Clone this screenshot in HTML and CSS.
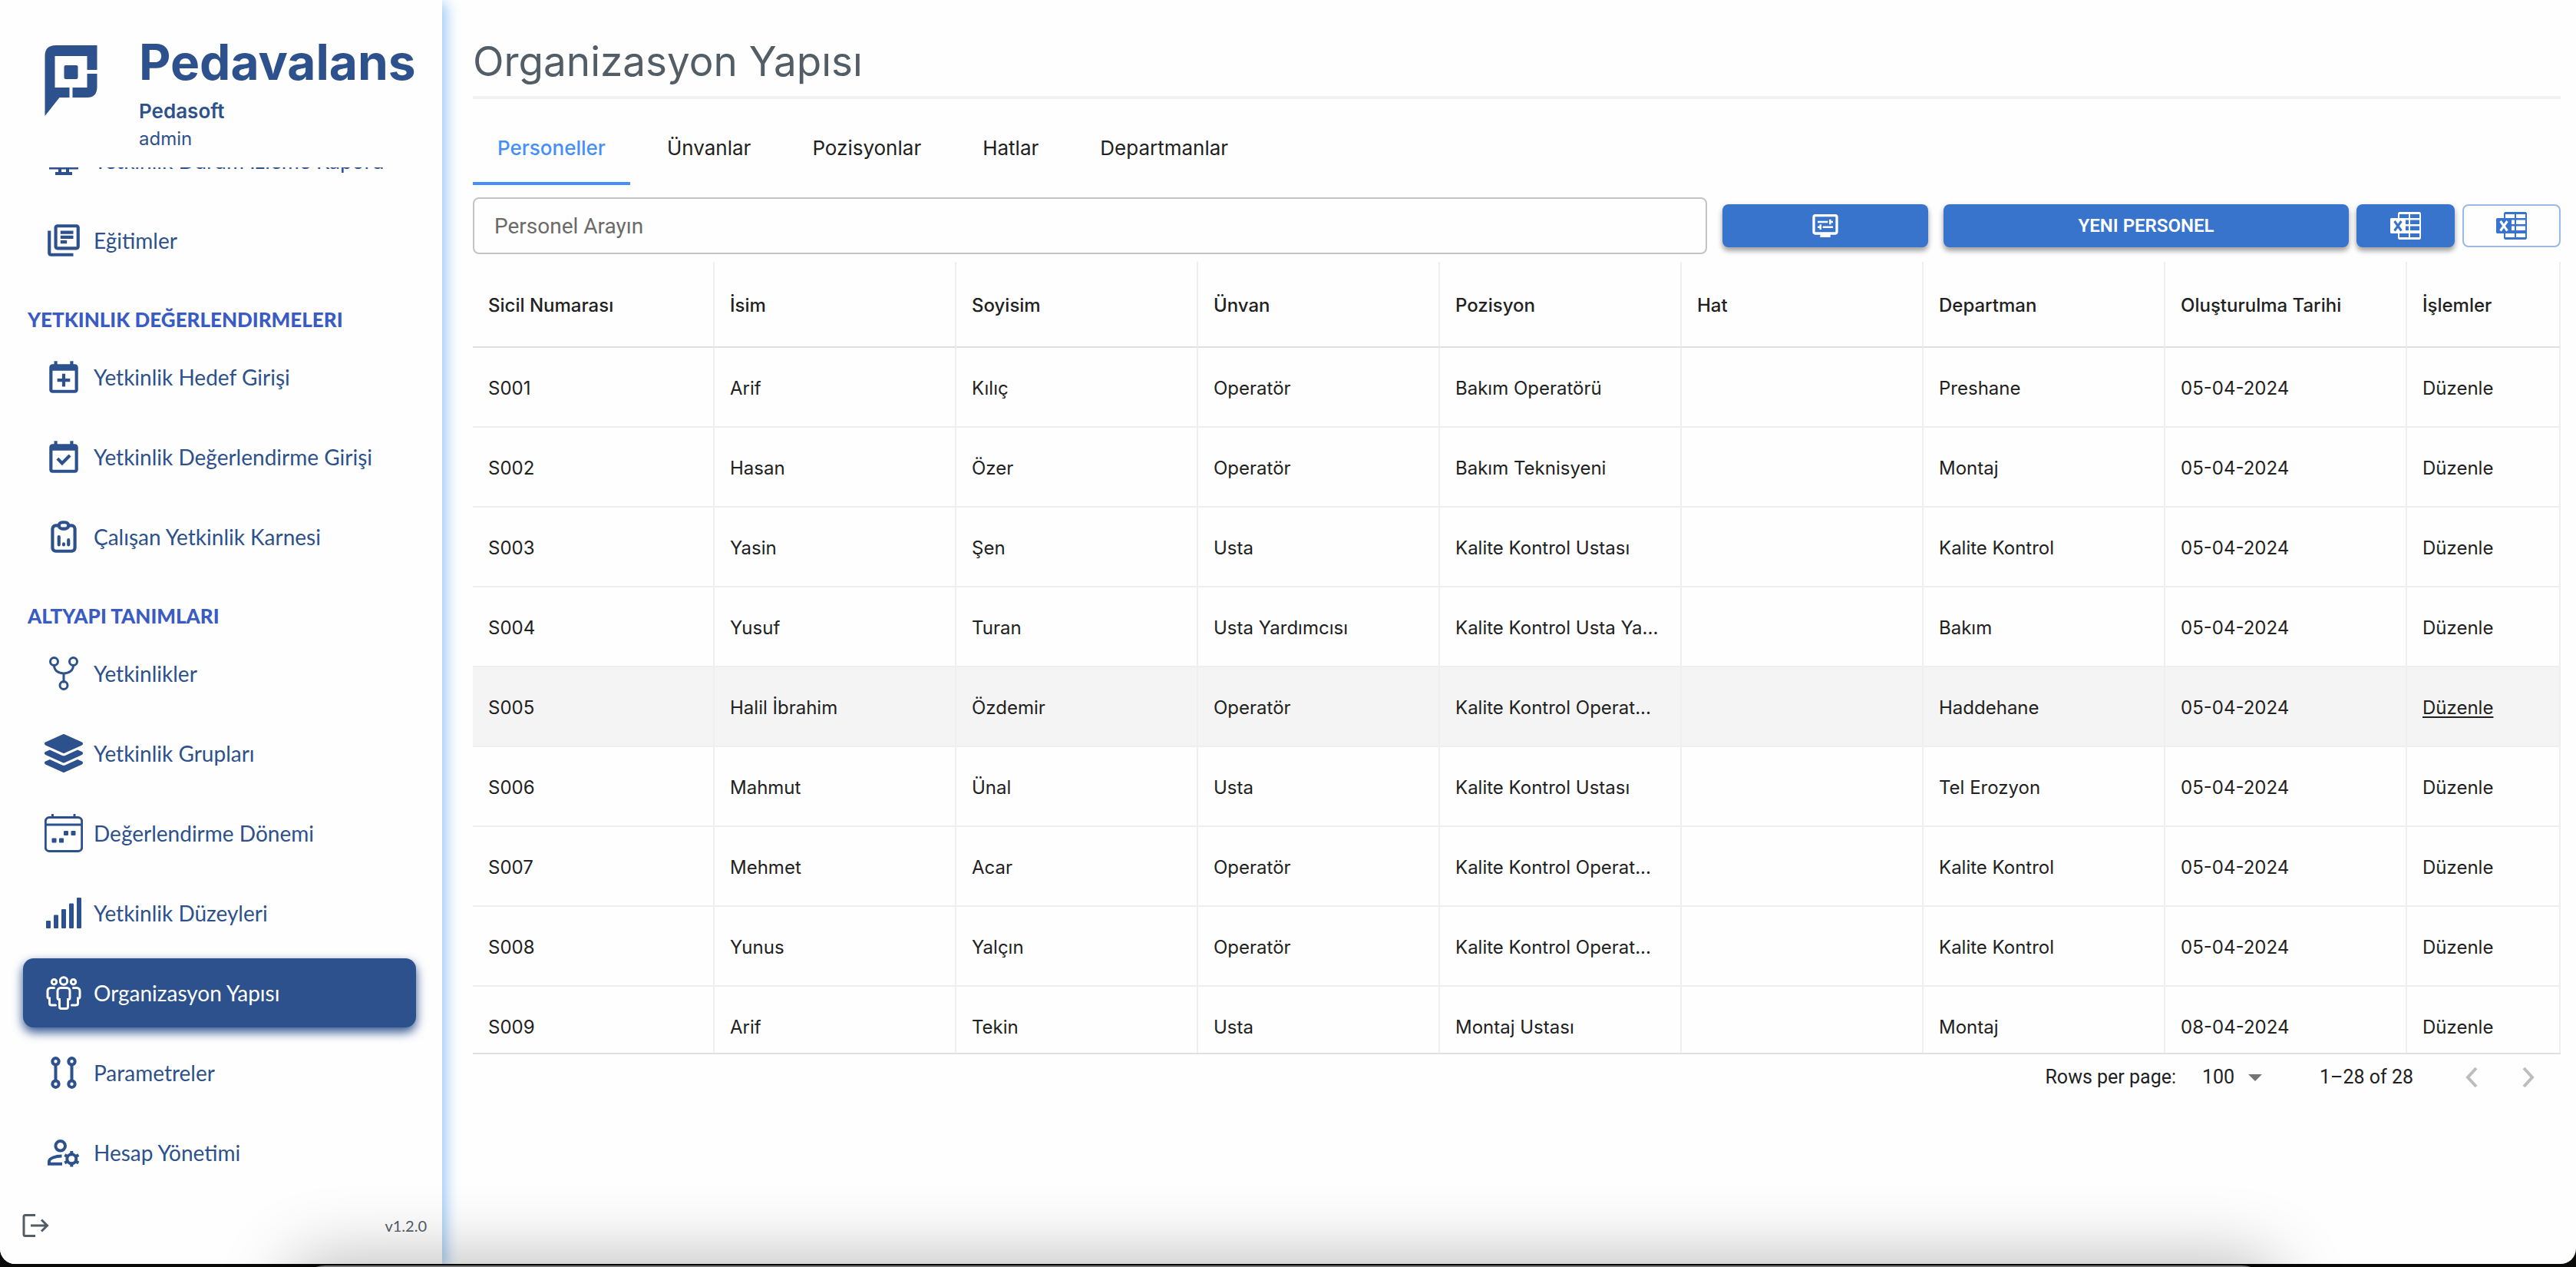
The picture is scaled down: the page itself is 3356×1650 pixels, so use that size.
FILE: index.html
```html
<!DOCTYPE html>
<html lang="tr">
<head>
<meta charset="utf-8">
<title>Pedavalans - Organizasyon Yapısı</title>
<link rel="stylesheet" href="styles.css">
</head>
<body>
<div class="app">
  <aside class="sidebar">
    <header class="brand">
      <svg class="brand-logo" viewBox="0 0 68 92" aria-hidden="true">
        <path d="M0 14Q0 0 14 0H68V32H55V14H13V55H32V68H19L0 92Z"/>
        <path d="M55 37H68V54Q68 68 55 68H36V55H55Z"/>
        <rect x="25" y="26" width="18" height="18" rx="2"/>
      </svg>
      <div class="brand-text">
        <div class="brand-name">Pedavalans</div>
        <div class="brand-company">Pedasoft</div>
        <div class="brand-user">admin</div>
      </div>
    </header>
    <nav class="nav">
      <a class="nav-item" href="#">
        <svg class="nav-icon" viewBox="0 0 50 50"><path class="line-bold" d="M8 8H42V33H8ZM6 34.500H44M20 34V41M30 34V41M14 42H36"/></svg>
        <span>Yetkinlik Durum İzleme Raporu</span>
      </a>
      <a class="nav-item" href="#">
        <svg class="nav-icon" viewBox="0 0 24 24"><path d="M4 6H2v14c0 1.1.9 2 2 2h14v-2H4V6zm16-4H8c-1.100 0-2 .9-2 2v12c0 1.100.9 2 2 2h12c1.100 0 2-.9 2-2V4c0-1.100-.9-2-2-2zm0 14H8V4h12v12zM10 9h8v2h-8zm0 3h4v2h-4zm0-6h8v2h-8z"/></svg>
        <span>Eğitimler</span>
      </a>
      <h2 class="nav-heading">YETKINLIK DEĞERLENDIRMELERI</h2>
      <a class="nav-item" href="#">
        <svg class="nav-icon" viewBox="0 0 24 24"><path d="M19 4h-1V2h-2v2H8V2H6v2H5c-1.110 0-2 .9-2 2v14c0 1.100.89 2 2 2h14c1.100 0 2-.9 2-2V6c0-1.100-.9-2-2-2zm0 16H5V8h14v12zM11 10h2v3h3v2h-3v3h-2v-3H8v-2h3z"/></svg>
        <span>Yetkinlik Hedef Girişi</span>
      </a>
      <a class="nav-item" href="#">
        <svg class="nav-icon" viewBox="0 0 24 24"><path d="M19 4h-1V2h-2v2H8V2H6v2H5c-1.110 0-2 .9-2 2v14c0 1.100.89 2 2 2h14c1.100 0 2-.9 2-2V6c0-1.100-.9-2-2-2zm0 16H5V8h14v12zM7.400 13.700l1.400-1.400 2.200 2.200 4.200-4.200 1.400 1.400-5.600 5.700z"/></svg>
        <span>Yetkinlik Değerlendirme Girişi</span>
      </a>
      <a class="nav-item" href="#">
        <svg class="nav-icon" viewBox="0 0 24 24"><path class="line-2" d="M9 5H7A2 2 0 0 0 5 7V19A2 2 0 0 0 7 21H17A2 2 0 0 0 19 19V7A2 2 0 0 0 17 5H15M11 3H13A2 2 0 0 1 13 7H11A2 2 0 0 1 11 3ZM9 12V17M12 16.500V17M15 14V17"/></svg>
        <span>Çalışan Yetkinlik Karnesi</span>
      </a>
      <h2 class="nav-heading">ALTYAPI TANIMLARI</h2>
      <a class="nav-item" href="#">
        <svg class="nav-icon" viewBox="0 0 50 50"><path class="line-thin" d="M12.500 14.500C12.500 21 18 25 25 25S37.500 21 37.500 14.500M25 25V36"/><circle class="line-thin" cx="12.500" cy="9.500" r="5"/><circle class="line-thin" cx="37.500" cy="9.500" r="5"/><circle class="line-thin" cx="25" cy="40.500" r="5"/></svg>
        <span>Yetkinlikler</span>
      </a>
      <a class="nav-item" href="#">
        <svg class="nav-icon" viewBox="0 0 512 512"><path d="M12.410 148.020l232.940 105.670c6.800 3.090 14.490 3.090 21.290 0l232.940-105.670c16.550-7.510 16.550-32.520 0-40.030L266.650 2.310a25.607 25.607 0 0 0-21.290 0L12.410 107.980c-16.550 7.510-16.550 32.530 0 40.040zm487.180 88.280l-58.090-26.330-161.640 73.270c-7.560 3.430-15.590 5.170-23.860 5.170s-16.290-1.740-23.860-5.170L70.510 209.970l-58.100 26.330c-16.550 7.500-16.550 32.500 0 40l232.940 105.590c6.800 3.080 14.490 3.080 21.290 0L499.590 276.300c16.550-7.500 16.550-32.500 0-40zm0 127.800l-57.870-26.230-161.860 73.370c-7.560 3.430-15.590 5.170-23.860 5.170s-16.290-1.740-23.860-5.170L70.290 337.870 12.410 364.100c-16.550 7.500-16.550 32.500 0 40l232.940 105.590c6.800 3.080 14.490 3.080 21.290 0L499.590 404.100c16.550-7.500 16.550-32.500 0-40z"/></svg>
        <span>Yetkinlik Grupları</span>
      </a>
      <a class="nav-item" href="#">
        <svg class="nav-icon" viewBox="0 0 50 50"><rect class="line-thin" x="1.300" y="4.500" width="47.400" height="44" rx="5"/><path class="line-thin" d="M1 14H49M10.500 1V4M39 1V4"/><rect x="25" y="22" width="6" height="6" rx="1"/><rect x="34.500" y="22" width="6" height="6" rx="1"/><rect x="9.500" y="31.500" width="6" height="6" rx="1"/><rect x="19" y="31.500" width="6" height="6" rx="1"/></svg>
        <span>Değerlendirme Dönemi</span>
      </a>
      <a class="nav-item" href="#">
        <svg class="nav-icon" viewBox="0 0 50 50"><rect x="2" y="35" width="6" height="10" rx="1"/><rect x="12" y="27.500" width="6" height="17.500" rx="1"/><rect x="22" y="20" width="6" height="25" rx="1"/><rect x="32" y="12.500" width="6" height="32.500" rx="1"/><rect x="42" y="5" width="6" height="40" rx="1"/></svg>
        <span>Yetkinlik Düzeyleri</span>
      </a>
      <a class="nav-item nav-item-active" href="#" aria-current="page">
        <svg class="nav-icon" viewBox="0 0 50 50"><circle class="line-thin" cx="25" cy="9.500" r="4.700"/><circle class="line-thin" cx="12.500" cy="10.700" r="3.200"/><circle class="line-thin" cx="37.500" cy="10.700" r="3.200"/><path class="line-thin" d="M21 18.500H29A4 4 0 0 1 33 22.500V31.500A2 2 0 0 1 31 33.500H30.500V43A2.500 2.500 0 0 1 28 45.500H22A2.500 2.500 0 0 1 19.500 43V33.500H19A2 2 0 0 1 17 31.500V22.500A4 4 0 0 1 21 18.500ZM12.500 18.500H8A4 4 0 0 0 4 22.500V30A2 2 0 0 0 6 32H6.500V38.500A2.500 2.500 0 0 0 9 41H14.500M37.500 18.500H42A4 4 0 0 1 46 22.500V30A2 2 0 0 1 44 32H43.500V38.500A2.500 2.500 0 0 1 41 41H35.500"/></svg>
        <span>Organizasyon Yapısı</span>
      </a>
      <a class="nav-item" href="#">
        <svg class="nav-icon" viewBox="0 0 50 50"><path class="line-bold" d="M14.500 14V36M35.500 14V36"/><circle class="line-bold" cx="14.500" cy="10.300" r="4.200"/><circle class="line-bold" cx="35.500" cy="10.300" r="4.200"/><circle class="line-bold" cx="14.500" cy="39.700" r="4.200"/><circle class="line-bold" cx="35.500" cy="39.700" r="4.200"/></svg>
        <span>Parametreler</span>
      </a>
      <a class="nav-item" href="#">
        <svg class="nav-icon" viewBox="0 0 50 50"><circle class="line-bold" cx="20.700" cy="16.300" r="6.300"/><path class="line-bold" d="M22.500 29.500C14 29.500 6 32.500 6 36.500V39.700H23"/><circle class="line-bold" cx="35.300" cy="33.300" r="6"/><path class="line-bold" d="M35.300 27.500V23M35.300 39V43.500M40.200 30.500L44.300 28.100M30.400 36.100L26.300 38.500M40.200 36.100L44.300 38.500M30.400 30.500L26.300 28.100"/></svg>
        <span>Hesap Yönetimi</span>
      </a>
    </nav>
    <footer class="sidebar-footer">
      <button class="logout" type="button" aria-label="Çıkış">
        <svg viewBox="0 0 36 32"><path d="M18 2.500H5Q3 2.500 3 4.500V27.500Q3 29.500 5 29.500H18M12 16H33M26 8.500L33.500 16L26 23.500"/></svg>
      </button>
      <span>v1.2.0</span>
    </footer>
  </aside>

  <main class="main">
    <h1 class="title">Organizasyon Yapısı</h1>
    <div class="tabs" role="tablist">
      <button class="tab tab-active" type="button" role="tab" aria-selected="true">Personeller</button>
      <button class="tab" type="button" role="tab">Ünvanlar</button>
      <button class="tab" type="button" role="tab">Pozisyonlar</button>
      <button class="tab" type="button" role="tab">Hatlar</button>
      <button class="tab" type="button" role="tab">Departmanlar</button>
    </div>
    <div class="toolbar">
      <input class="search" type="text" placeholder="Personel Arayın" aria-label="Personel Arayın">
      <button class="button" type="button" aria-label="Görünüm ayarları">
        <svg class="icon-display" viewBox="0 0 24 24"><path d="M20 3H4c-1.110 0-2 .89-2 2v12c0 1.100.89 2 2 2h4v2h8v-2h4c1.100 0 2-.9 2-2V5c0-1.110-.9-2-2-2zm0 14H4V5h16v12zM6 8.250h8v1.500H6zM16.500 9.750H18v-1.500h-1.500V7H15v4h1.500zM10 12.250h8v1.500h-8zM7.500 15H9v-4H7.500v1.250H6v1.500h1.500z"/></svg>
      </button>
      <button class="button" type="button">YENI PERSONEL</button>
      <div class="export">
        <button class="button" type="button" aria-label="Excel içe aktar">
          <svg class="icon-excel" viewBox="0 0 40 36"><path fill-rule="evenodd" d="M11.500 0H38.500L40 1.500V34.500L38.500 36H11.500L10 34.500V28H1L0 27V9L1 8H10V1.500ZM12 3V8H24V3ZM26 3V8H38V3ZM26 10.500V16H38V10.500ZM26 18.500V24H38V18.500ZM26 28V33H38V28ZM12 28V33H24V28ZM20 10.500V16H24V10.500ZM20 18.500V24H24V18.500Z"/><path class="excel-cross" d="M5.500 12L14.500 24.500M14.500 12L5.500 24.500"/></svg>
        </button>
        <button class="button button-outlined" type="button" aria-label="Excel dışa aktar">
          <svg class="icon-excel" viewBox="0 0 40 36"><path fill-rule="evenodd" d="M11.500 0H38.500L40 1.500V34.500L38.500 36H11.500L10 34.500V28H1L0 27V9L1 8H10V1.500ZM12 3V8H24V3ZM26 3V8H38V3ZM26 10.500V16H38V10.500ZM26 18.500V24H38V18.500ZM26 28V33H38V28ZM12 28V33H24V28ZM20 10.500V16H24V10.500ZM20 18.500V24H24V18.500Z"/><path class="excel-cross" d="M5.500 12L14.500 24.500M14.500 12L5.500 24.500"/></svg>
        </button>
      </div>
    </div>
    <div class="table-scroll">
      <table class="table">
        <thead>
          <tr><th>Sicil Numarası</th><th>İsim</th><th>Soyisim</th><th>Ünvan</th><th>Pozisyon</th><th>Hat</th><th>Departman</th><th>Oluşturulma Tarihi</th><th class="col-actions">İşlemler</th></tr>
        </thead>
        <tbody>
          <tr><td>S001</td><td>Arif</td><td>Kılıç</td><td>Operatör</td><td>Bakım Operatörü</td><td></td><td>Preshane</td><td>05-04-2024</td><td><a href="#">Düzenle</a></td></tr>
          <tr><td>S002</td><td>Hasan</td><td>Özer</td><td>Operatör</td><td>Bakım Teknisyeni</td><td></td><td>Montaj</td><td>05-04-2024</td><td><a href="#">Düzenle</a></td></tr>
          <tr><td>S003</td><td>Yasin</td><td>Şen</td><td>Usta</td><td>Kalite Kontrol Ustası</td><td></td><td>Kalite Kontrol</td><td>05-04-2024</td><td><a href="#">Düzenle</a></td></tr>
          <tr><td>S004</td><td>Yusuf</td><td>Turan</td><td>Usta Yardımcısı</td><td>Kalite Kontrol Usta Ya...</td><td></td><td>Bakım</td><td>05-04-2024</td><td><a href="#">Düzenle</a></td></tr>
          <tr class="row-hover"><td>S005</td><td>Halil İbrahim</td><td>Özdemir</td><td>Operatör</td><td>Kalite Kontrol Operat...</td><td></td><td>Haddehane</td><td>05-04-2024</td><td><a href="#">Düzenle</a></td></tr>
          <tr><td>S006</td><td>Mahmut</td><td>Ünal</td><td>Usta</td><td>Kalite Kontrol Ustası</td><td></td><td>Tel Erozyon</td><td>05-04-2024</td><td><a href="#">Düzenle</a></td></tr>
          <tr><td>S007</td><td>Mehmet</td><td>Acar</td><td>Operatör</td><td>Kalite Kontrol Operat...</td><td></td><td>Kalite Kontrol</td><td>05-04-2024</td><td><a href="#">Düzenle</a></td></tr>
          <tr><td>S008</td><td>Yunus</td><td>Yalçın</td><td>Operatör</td><td>Kalite Kontrol Operat...</td><td></td><td>Kalite Kontrol</td><td>05-04-2024</td><td><a href="#">Düzenle</a></td></tr>
          <tr><td>S009</td><td>Arif</td><td>Tekin</td><td>Usta</td><td>Montaj Ustası</td><td></td><td>Montaj</td><td>08-04-2024</td><td><a href="#">Düzenle</a></td></tr>
        </tbody>
      </table>
    </div>
    <div class="pagination">
      <label for="rows">Rows per page:</label>
      <div class="rows-select">
        <select id="rows"><option>100</option></select>
        <svg viewBox="0 0 20 10" aria-hidden="true"><path d="M0 0H20L10 10Z"/></svg>
      </div>
      <span class="range">1–28 of 28</span>
      <button class="page-button" type="button" aria-label="Önceki sayfa" disabled><svg viewBox="0 0 24 24"><path d="M15 6L9.500 12L15 18"/></svg></button>
      <button class="page-button" type="button" aria-label="Sonraki sayfa" disabled><svg viewBox="0 0 24 24"><path d="M9 6L14.500 12L9 18"/></svg></button>
    </div>
  </main>
</div>
<div class="dock"></div>
</body>
</html>
```
FILE: styles.css
```css
* { box-sizing: border-box; }

html { overflow: hidden; }

body {
  margin: 0;
  height: 100vh;
  padding-bottom: 4px;
  position: relative;
  overflow: hidden;
  background: #0a0a08;
  font-family: "Inter", sans-serif;
  font-size: 24px;
  color: #212121;
}

button, input, select { font: inherit; color: inherit; }
button { border: 0; padding: 0; background: none; }
a { color: inherit; text-decoration: none; }

.app {
  display: flex;
  height: 100%;
  overflow: hidden;
  background: #fefefe;
  border-radius: 0 0 20px 20px;
}

/* Sidebar */
.sidebar {
  width: 576px;
  flex: none;
  display: flex;
  flex-direction: column;
  background: #fefefe;
  box-shadow: 4px 4px 18px #8fc1f3;
}

.brand {
  flex: none;
  display: flex;
  gap: 54px;
  height: 218px;
  padding: 43px 0 0 58px;
  color: #2d518c;
}
.brand-logo { flex: none; width: 69px; height: 92px; margin-top: 16px; fill: currentColor; }
.brand-name { font-size: 64px; line-height: 76px; font-weight: 700; margin-bottom: 8px; }
.brand-company { font-size: 26px; line-height: 36px; font-weight: 600; }
.brand-user { font-size: 24px; line-height: 36px; }

.nav {
  flex: 1;
  min-height: 0;
  overflow: hidden;
  display: flex;
  flex-direction: column;
  justify-content: flex-end;
  padding: 0 34px 0 30px;
}
.nav-item {
  flex: none;
  display: flex;
  align-items: center;
  gap: 14px;
  height: 90px;
  margin: 7px 0;
  padding: 0 28px;
  border-radius: 14px;
  color: #2d518c;
  font: 28px/36px "Lato", sans-serif;
}
.nav-item-active { background: #2d518c; color: #fff; box-shadow: 0 6px 14px #2d518c; }
.nav-icon { flex: none; width: 50px; height: 50px; fill: currentColor; }
.nav-heading {
  flex: none;
  margin: 0;
  padding: 35px 6px 7px;
  color: #3b5bc4;
  font: 900 26px/32px "Lato", sans-serif;
}

.line-thin, .line-bold, .line-2 { fill: none; stroke: currentColor; stroke-linecap: round; }
.line-thin { stroke-width: 3; }
.line-bold { stroke-width: 4; stroke-linecap: butt; }
.line-2 { stroke-width: 2; }

.sidebar-footer {
  flex: none;
  display: flex;
  align-items: center;
  justify-content: space-between;
  height: 93px;
  padding: 0 20px 8px 28px;
  color: #535d66;
  font: 20px/28px "Lato", sans-serif;
}
.logout svg { display: block; width: 36px; height: 32px; fill: none; stroke: #535d66; stroke-width: 3; }

/* Main */
.main { flex: 1; min-width: 0; padding: 40px 20px 0 40px; }

.title {
  margin: 0;
  height: 89px;
  border-bottom: 4px solid #f2f2f2;
  color: #535d66;
  font-size: 53px;
  line-height: 80px;
  font-weight: 400;
}

.tabs { display: flex; gap: 16px; height: 96px; margin-top: 16px; }
.tab {
  padding: 0 32px;
  border-top: 4px solid transparent;
  border-bottom: 4px solid transparent;
  font-size: 26px;
  line-height: 32px;
  font-weight: 400;
}
.tab-active { color: #448ffb; border-bottom-color: #448ffb; font-weight: 500; }

.toolbar {
  display: grid;
  grid-template-columns: 402fr 67fr 132fr auto;
  align-items: center;
  column-gap: 20px;
  margin-top: 16px;
}
.search {
  width: 100%;
  height: 74px;
  padding: 0 26px;
  border: 2px solid #c4c4c4;
  border-radius: 8px;
  background: transparent;
  font: 28px/36px "Roboto", sans-serif;
}
.search::placeholder { color: #6b6b6b; opacity: 1; }
.button {
  display: flex;
  align-items: center;
  justify-content: center;
  height: 56px;
  border-radius: 8px;
  background: #3874cb;
  color: #fff;
  font: 600 24px/32px "Roboto", sans-serif;
  box-shadow: 0 5px 6px rgba(0, 0, 0, .3), 0 2px 8px rgba(0, 0, 0, .12);
}
.export { display: flex; gap: 10px; margin-left: -10px; }
.export .button { width: 128px; }
.button-outlined { background: transparent; border: 2px solid #9bb9e5; color: #3874cb; box-shadow: none; }
.icon-display { width: 40px; height: 40px; fill: currentColor; }
.icon-excel { width: 40px; height: 36px; fill: currentColor; }
.excel-cross { stroke: #3874cb; stroke-width: 3; }
.button-outlined .excel-cross { stroke: #fff; }

/* Personnel table */
.table-scroll {
  max-height: 1032px;
  margin-top: 10px;
  overflow: hidden;
  border-bottom: 2px solid #e0e0e0;
}
.table { width: 100%; table-layout: fixed; border-collapse: separate; border-spacing: 0; }
.table th, .table td {
  height: 104px;
  padding: 3px 18px 0 20px;
  border-right: 2px solid #efefef;
  border-bottom: 2px solid #efefef;
  text-align: left;
  white-space: nowrap;
  overflow: hidden;
  line-height: 32px;
}
.table th { height: 112px; border-bottom-color: #e0e0e0; font-weight: 500; }
.table .col-actions { width: 200px; }
.row-hover td { background: #f4f4f4; }
.row-hover a { text-decoration: underline; text-underline-offset: 3px; }

.pagination {
  display: flex;
  align-items: center;
  justify-content: flex-end;
  height: 60px;
  font: 25px/32px "Roboto", sans-serif;
}
.rows-select { position: relative; margin: 0 75px 0 34px; width: 78px; }
.rows-select select {
  display: block;
  width: 100%;
  padding: 0;
  border: 0;
  appearance: none;
  background: transparent;
}
.rows-select svg { position: absolute; right: 0; top: 12px; width: 18px; height: 9px; fill: #757575; pointer-events: none; }
.range { margin-right: 52px; }
.page-button { width: 48px; height: 48px; margin-right: 10px; }
.page-button + .page-button { margin: 0 18px 0 16px; }
.page-button svg { display: block; width: 48px; height: 48px; fill: none; stroke: #bdbdbd; stroke-width: 2; }

/* Edge of the system dock, over the bottom of the window */
.dock {
  position: absolute;
  left: 384px;
  right: 396px;
  bottom: -98px;
  height: 100px;
  border-radius: 40px;
  background: #777;
  box-shadow: 0 0 90px 10px rgba(0, 0, 0, .26);
  pointer-events: none;
}
```
